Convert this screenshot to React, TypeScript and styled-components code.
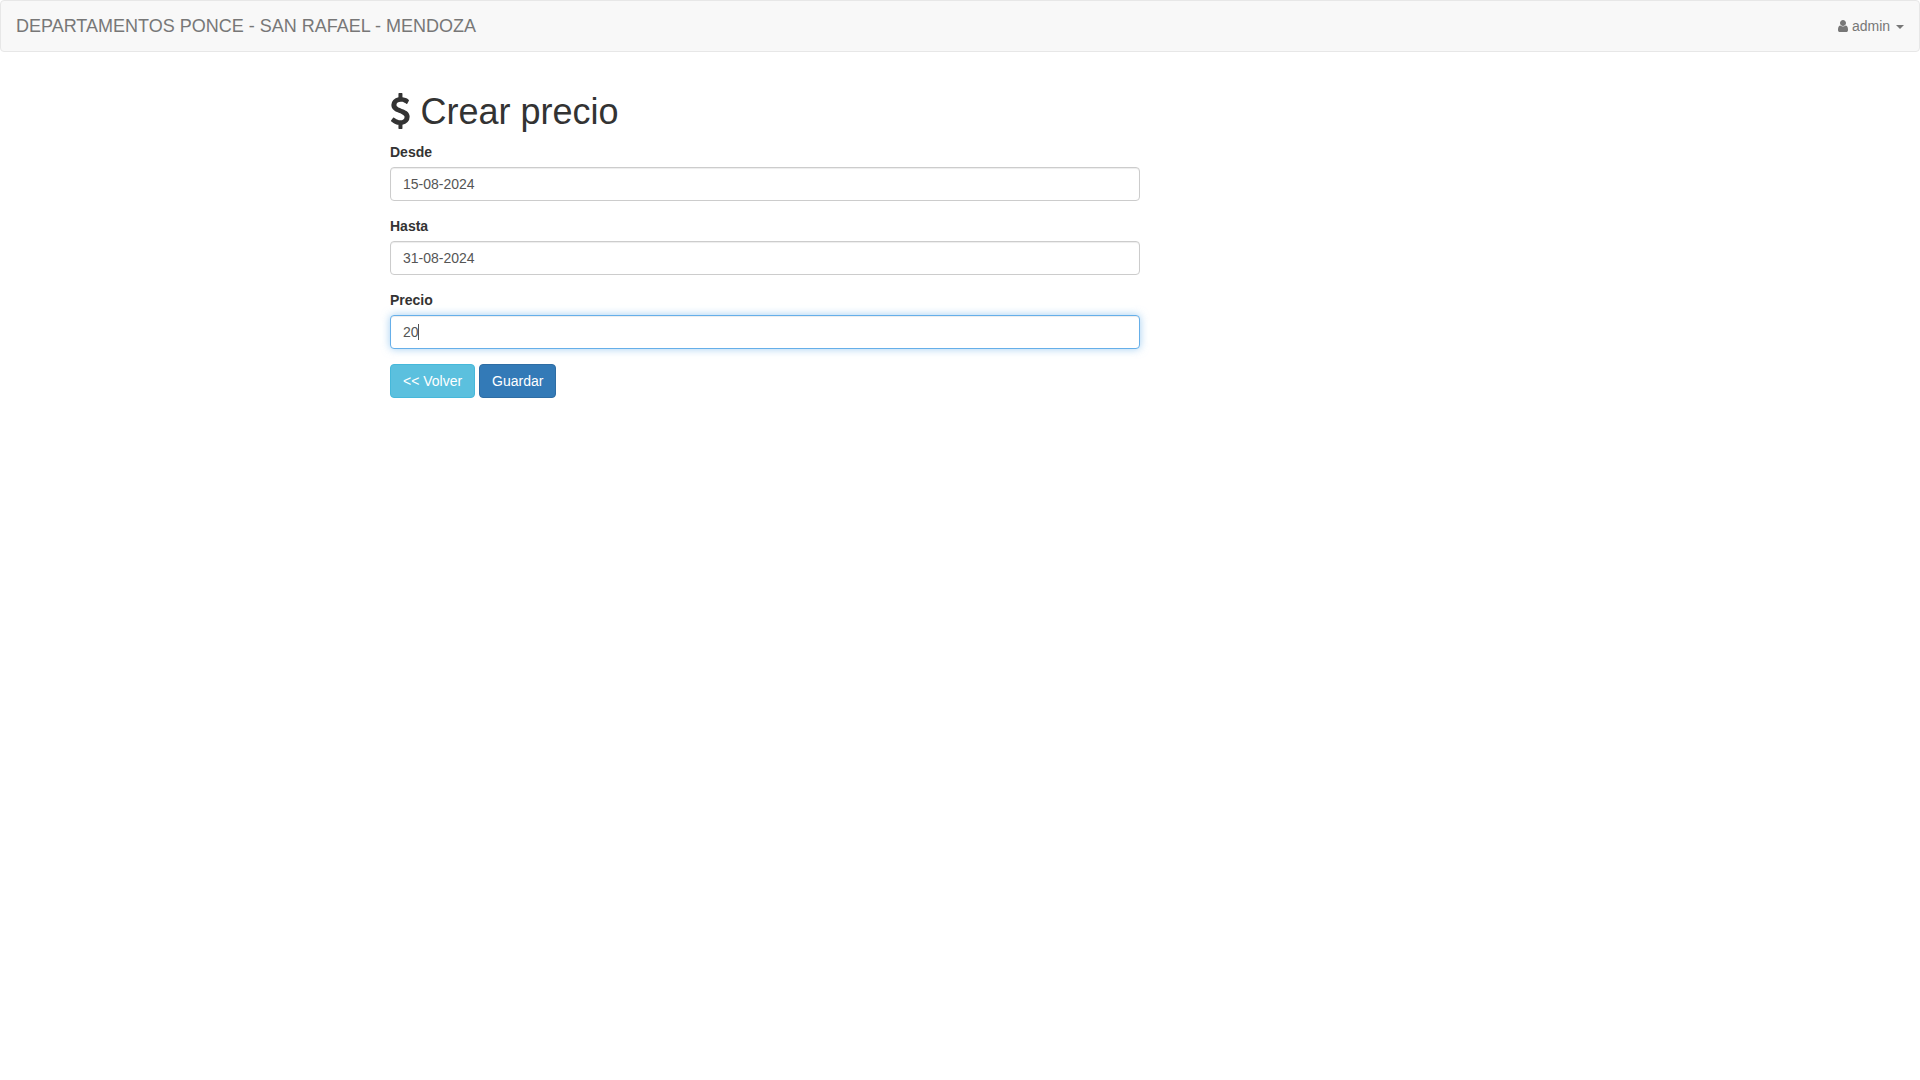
import React from "react";
import styled, { createGlobalStyle, css } from "styled-components";

const GlobalStyle = createGlobalStyle`
  *, *::before, *::after { box-sizing: border-box; }
  body {
    margin: 0;
    font-family: "Helvetica Neue", Helvetica, Arial, "Liberation Sans", sans-serif;
    font-size: 14px;
    line-height: 1.42857143;
    color: #333;
    background: #fff;
  }
`;

const Navbar = styled.nav`
  display: flex;
  justify-content: space-between;
  min-height: 52px;
  margin-bottom: 20px;
  background: #f8f8f8;
  border: 1px solid #e7e7e7;
  border-radius: 4px;
`;

const Brand = styled.a`
  padding: 15px;
  font-size: 18px;
  line-height: 20px;
  color: #777;
`;

const UserMenu = styled.a`
  padding: 15px;
  line-height: 20px;
  color: #777;
  cursor: pointer;
`;

const MenuCaret = styled.b`
  display: inline-block;
  width: 0;
  height: 0;
  margin-left: 2px;
  vertical-align: middle;
  border-top: 4px dashed;
  border-right: 4px solid transparent;
  border-left: 4px solid transparent;
`;

const Glyph = styled.svg`
  height: 1em;
  width: auto;
  vertical-align: -0.142857em;
  fill: currentColor;
`;

const Container = styled.main`
  display: flow-root;
  width: 1170px;
  margin: 0 auto;
  padding: 0 15px;
`;

const Column = styled.div`
  width: 750px;
`;

const Title = styled.h1`
  margin: 20px 0 10px;
  font-size: 36px;
  font-weight: 500;
  line-height: 1.1;
`;

const FormGroup = styled.div`
  margin-bottom: 15px;
`;

const Label = styled.label`
  display: inline-block;
  max-width: 100%;
  margin-bottom: 5px;
  font-weight: 700;
`;

const Control = styled.div`
  position: relative;
`;

const Input = styled.input<{ $active?: boolean }>`
  display: block;
  width: 100%;
  height: 34px;
  padding: 6px 12px;
  font-family: inherit;
  font-size: 14px;
  line-height: 1.42857143;
  color: #555;
  background: #fff;
  border: 1px solid #ccc;
  border-radius: 4px;
  outline: 0;
  box-shadow: inset 0 1px 1px rgba(0, 0, 0, 0.075);
  ${({ $active }) =>
    $active &&
    css`
      border-color: #66afe9;
      box-shadow: inset 0 1px 1px rgba(0, 0, 0, 0.075), 0 0 8px rgba(102, 175, 233, 0.6);
    `}
`;

const TextCursor = styled.span`
  position: absolute;
  top: 9px;
  left: 28px;
  width: 1px;
  height: 16px;
  background: #555;
`;

const Button = styled.button<{ $tone: "info" | "primary" }>`
  display: inline-block;
  padding: 6px 12px;
  font-family: inherit;
  font-size: 14px;
  line-height: 1.42857143;
  text-align: center;
  white-space: nowrap;
  vertical-align: middle;
  cursor: pointer;
  color: #fff;
  border: 1px solid ${({ $tone }) => ($tone === "info" ? "#46b8da" : "#2e6da4")};
  background: ${({ $tone }) => ($tone === "info" ? "#5bc0de" : "#337ab7")};
  border-radius: 4px;
`;

const UserIcon = () => (
  <Glyph viewBox="256 0 1280 1792" aria-hidden="true">
    <path d="M1536 1399q0 109-62.5 187t-150.5 78h-854q-88 0-150.5-78t-62.5-187q0-85 8.5-160.5t31.5-152 58.5-131 94-89 134.5-34.5q131 128 313 128t313-128q76 0 134.5 34.5t94 89 58.5 131 31.5 152 8.5 160.5zm-256-887q0 159-112.5 271.5t-271.5 112.5-271.5-112.5-112.5-271.5 112.5-271.5 271.5-112.5 271.5 112.5 112.5 271.5z" />
  </Glyph>
);

const DollarIcon = () => (
  <Glyph viewBox="384 0 1024 1792" aria-hidden="true">
    <path d="M1362 1185q0 153-99.5 263.5t-258.5 136.5v175q0 14-9 23t-23 9h-135q-13 0-22.5-9.5t-9.5-22.5v-175q-66-9-127.5-31t-101.5-44.5-74-48-46.5-37.5-17.5-18q-17-21-2-41l103-135q7-10 23-12 15-2 24 9l2 2q113 99 243 125 37 8 74 8 81 0 142.5-43t61.5-122q0-28-15-53t-33.5-42-58.5-37.5-66-32-80-32.5q-39-16-61.5-25t-61.5-26.5-62.5-31-56.5-35.5-53.5-42.5-43.5-49-35.5-58-21-66.5-8.5-78q0-138 98-242t255-134v-180q0-13 9.5-22.5t22.5-9.5h135q14 0 23 9t9 23v176q57 6 110.5 23t87 33.5 63.5 37.5 39 29 15 14q17 18 5 38l-81 146q-8 15-23 16-14 3-27-7-3-3-14.5-12t-39-26.5-58.5-32-74.5-26-85.5-11.5q-95 0-155 43t-60 111q0 26 8.5 48t29.5 41.5 39.5 33 56 31 60.5 27 70 27.5q53 20 81 31.5t76 35 75.5 42.5 62 50 53 63.5 31.5 76.5 13 94z" />
  </Glyph>
);

const fields = [
  { id: "desde", label: "Desde", value: "15-08-2024" },
  { id: "hasta", label: "Hasta", value: "31-08-2024" },
  { id: "precio", label: "Precio", value: "20", active: true },
];

export default function App() {
  return (
    <>
      <GlobalStyle />
      <Navbar>
        <Brand>DEPARTAMENTOS PONCE - SAN RAFAEL - MENDOZA</Brand>
        <UserMenu>
          <UserIcon /> admin <MenuCaret />
        </UserMenu>
      </Navbar>
      <Container>
        <Column>
          <Title>
            <DollarIcon /> Crear precio
          </Title>
          <form onSubmit={(e) => e.preventDefault()}>
            {fields.map(({ id, label, value, active }) => (
              <FormGroup key={id}>
                <Label htmlFor={id}>{label}</Label>
                <Control>
                  <Input id={id} type="text" defaultValue={value} autoComplete="off" $active={active} />
                  {active && <TextCursor />}
                </Control>
              </FormGroup>
            ))}
            <Button type="button" $tone="info">{"<< Volver"}</Button>{" "}
            <Button type="submit" $tone="primary">Guardar</Button>
          </form>
        </Column>
      </Container>
    </>
  );
}
